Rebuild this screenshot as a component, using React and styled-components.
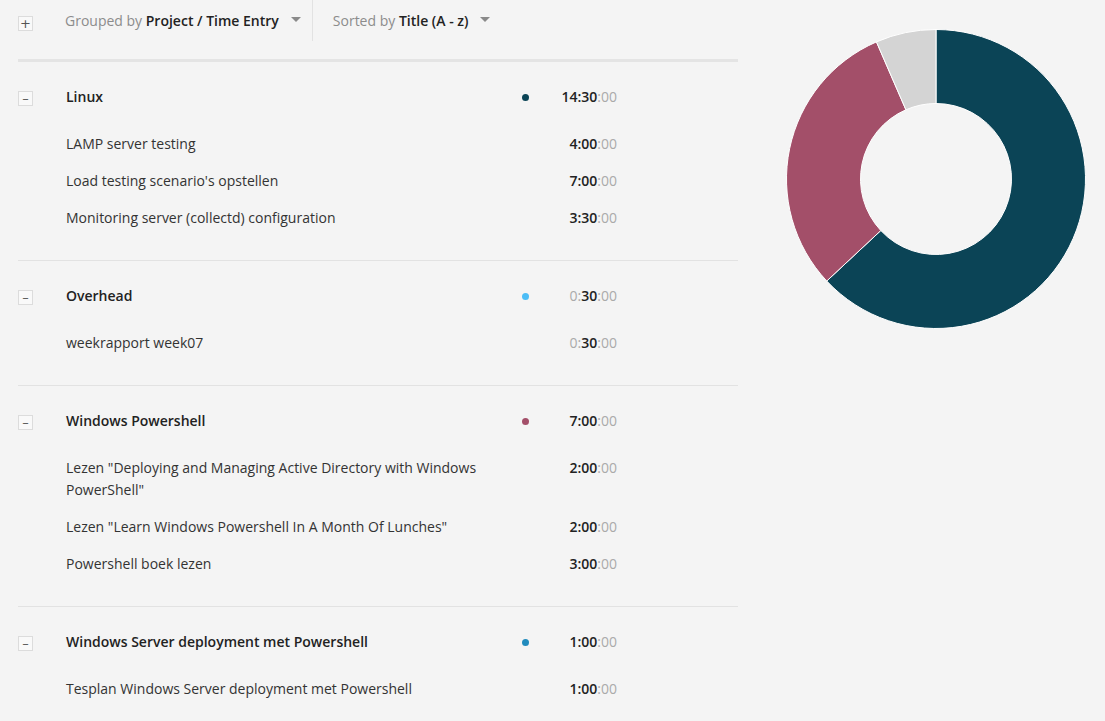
import React from "react";
import styled, { createGlobalStyle } from "styled-components";

const GlobalStyle = createGlobalStyle`
  html, body {
    margin: 0;
    padding: 0;
    background: #f4f4f4;
  }
  body {
    font-family: "Open Sans", "Liberation Sans", sans-serif;
    font-size: 14px;
    color: #333;
  }
`;

const Page = styled.div`
  display: grid;
  grid-template-columns: 720px 300px;
  column-gap: 48px;
  padding-left: 18px;
  width: 1105px;
  height: 721px;
  box-sizing: border-box;
  overflow: hidden;
`;

const Main = styled.div`
  display: flex;
  flex-direction: column;
`;

const Toolbar = styled.div`
  display: flex;
  align-items: center;
  height: 41px;
  border-bottom: 3px solid #e4e4e4;
  padding-bottom: 18px;
`;

const ToggleBox = styled.span`
  width: 13px;
  height: 13px;
  border: 1px solid #dcdcdc;
  background: #f9f9f9;
  display: flex;
  align-items: ${(p) => (p.$minus ? "flex-end" : "center")};
  justify-content: center;
  color: #555;
  font-size: 13px;
  line-height: 13px;
  font-family: "DejaVu Sans", sans-serif;
  margin-top: ${(p) => p.$offset || 0}px;
`;

const Dropdown = styled.div`
  display: flex;
  align-items: center;
  height: 41px;
  padding: 0 11px 0 ${(p) => p.$pad}px;
  border-right: ${(p) => (p.$divider ? "1px solid #e2e2e2" : "none")};
  color: #8c8c8c;
  white-space: pre;
  b {
    color: #222;
    font-weight: 600;
  }
`;

const Caret = styled.span`
  width: 0;
  height: 0;
  margin-left: 12px;
  border-left: 5px solid transparent;
  border-right: 5px solid transparent;
  border-top: 5px solid #8a8a8a;
  margin-top: -2px;
`;

const Group = styled.section`
  padding: 24px 0 23px;
  & + & {
    border-top: 1px solid #e2e2e2;
  }
`;

const Row = styled.div`
  display: grid;
  grid-template-columns: 48px 448px 21px 82px 1fr;
  align-items: start;
  line-height: 22px;
  padding: ${(p) => (p.$head ? "0 0 18px" : "7px 0 8px")};
`;

const BoxCell = styled.div`
  height: 22px;
  display: flex;
  align-items: center;
`;

const Title = styled.div`
  color: ${(p) => (p.$head ? "#222" : "#333")};
  font-weight: ${(p) => (p.$head ? 600 : 400)};
`;

const DotCell = styled.div`
  height: 22px;
  display: flex;
  align-items: center;
  justify-content: center;
`;

const Dot = styled.span`
  width: 7px;
  height: 7px;
  border-radius: 50%;
  background: ${(p) => p.$color};
  margin-left: 1px;
`;

const Time = styled.div`
  text-align: right;
  color: #aaa;
  b {
    color: #222;
    font-weight: 600;
  }
`;

const ChartWrap = styled.div`
  padding-top: 29px;
`;

const groups = [
  {
    name: "Linux",
    color: "#0b4456",
    time: [14, 30],
    items: [
      ["LAMP server testing", [4, 0]],
      ["Load testing scenario's opstellen", [7, 0]],
      ["Monitoring server (collectd) configuration", [3, 30]],
    ],
  },
  {
    name: "Overhead",
    color: "#4cbdf6",
    time: [0, 30],
    items: [["weekrapport week07", [0, 30]]],
  },
  {
    name: "Windows Powershell",
    color: "#a34f69",
    time: [7, 0],
    items: [
      ['Lezen "Deploying and Managing Active Directory with Windows PowerShell"', [2, 0]],
      ['Lezen "Learn Windows Powershell In A Month Of Lunches"', [2, 0]],
      ["Powershell boek lezen", [3, 0]],
    ],
  },
  {
    name: "Windows Server deployment met Powershell",
    color: "#218bbd",
    time: [1, 0],
    items: [["Tesplan Windows Server deployment met Powershell", [1, 0]]],
  },
];

const pad = (n) => String(n).padStart(2, "0");

const Duration = ({ value }) => {
  const [h, m] = value;
  if (h === 0) {
    return (
      <Time>
        0:<b>{pad(m)}</b>:00
      </Time>
    );
  }
  return (
    <Time>
      <b>
        {h}:{pad(m)}
      </b>
      :00
    </Time>
  );
};

const slices = [
  { value: 14.5, color: "#0b4456" },
  { value: 7, color: "#a34f69" },
  { value: 1.5, color: "#d4d4d4" },
];

const point = (r, a) => {
  const rad = ((a - 90) * Math.PI) / 180;
  return [150 + r * Math.cos(rad), 150 + r * Math.sin(rad)];
};

const arcPath = (start, end, ro, ri) => {
  const large = end - start > 180 ? 1 : 0;
  const [x1, y1] = point(ro, start);
  const [x2, y2] = point(ro, end);
  const [x3, y3] = point(ri, end);
  const [x4, y4] = point(ri, start);
  return `M${x1} ${y1} A${ro} ${ro} 0 ${large} 1 ${x2} ${y2} L${x3} ${y3} A${ri} ${ri} 0 ${large} 0 ${x4} ${y4} Z`;
};

const Donut = () => {
  const total = slices.reduce((s, x) => s + x.value, 0);
  let acc = 0;
  return (
    <svg width="300" height="300" viewBox="0 0 300 300">
      {slices.map((s, i) => {
        const start = (acc / total) * 360;
        acc += s.value;
        const end = (acc / total) * 360;
        return (
          <path
            key={i}
            d={arcPath(start, end, 149.5, 75.5)}
            fill={s.color}
            stroke="#fff"
            strokeWidth="1"
          />
        );
      })}
    </svg>
  );
};

export default function App() {
  return (
    <>
      <GlobalStyle />
      <Page>
        <Main>
          <Toolbar>
            <ToggleBox $offset={5}>+</ToggleBox>
            <Dropdown $pad={32} $divider>
              Grouped by <b>Project / Time Entry</b>
              <Caret />
            </Dropdown>
            <Dropdown $pad={20}>
              Sorted by <b>Title (A - z)</b>
              <Caret />
            </Dropdown>
          </Toolbar>
          {groups.map((g) => (
            <Group key={g.name}>
              <Row $head>
                <BoxCell>
                  <ToggleBox $minus $offset={3}>–</ToggleBox>
                </BoxCell>
                <Title $head>{g.name}</Title>
                <DotCell>
                  <Dot $color={g.color} />
                </DotCell>
                <Duration value={g.time} />
              </Row>
              {g.items.map(([title, t]) => (
                <Row key={title}>
                  <BoxCell />
                  <Title>{title}</Title>
                  <DotCell />
                  <Duration value={t} />
                </Row>
              ))}
            </Group>
          ))}
        </Main>
        <ChartWrap>
          <Donut />
        </ChartWrap>
      </Page>
    </>
  );
}
